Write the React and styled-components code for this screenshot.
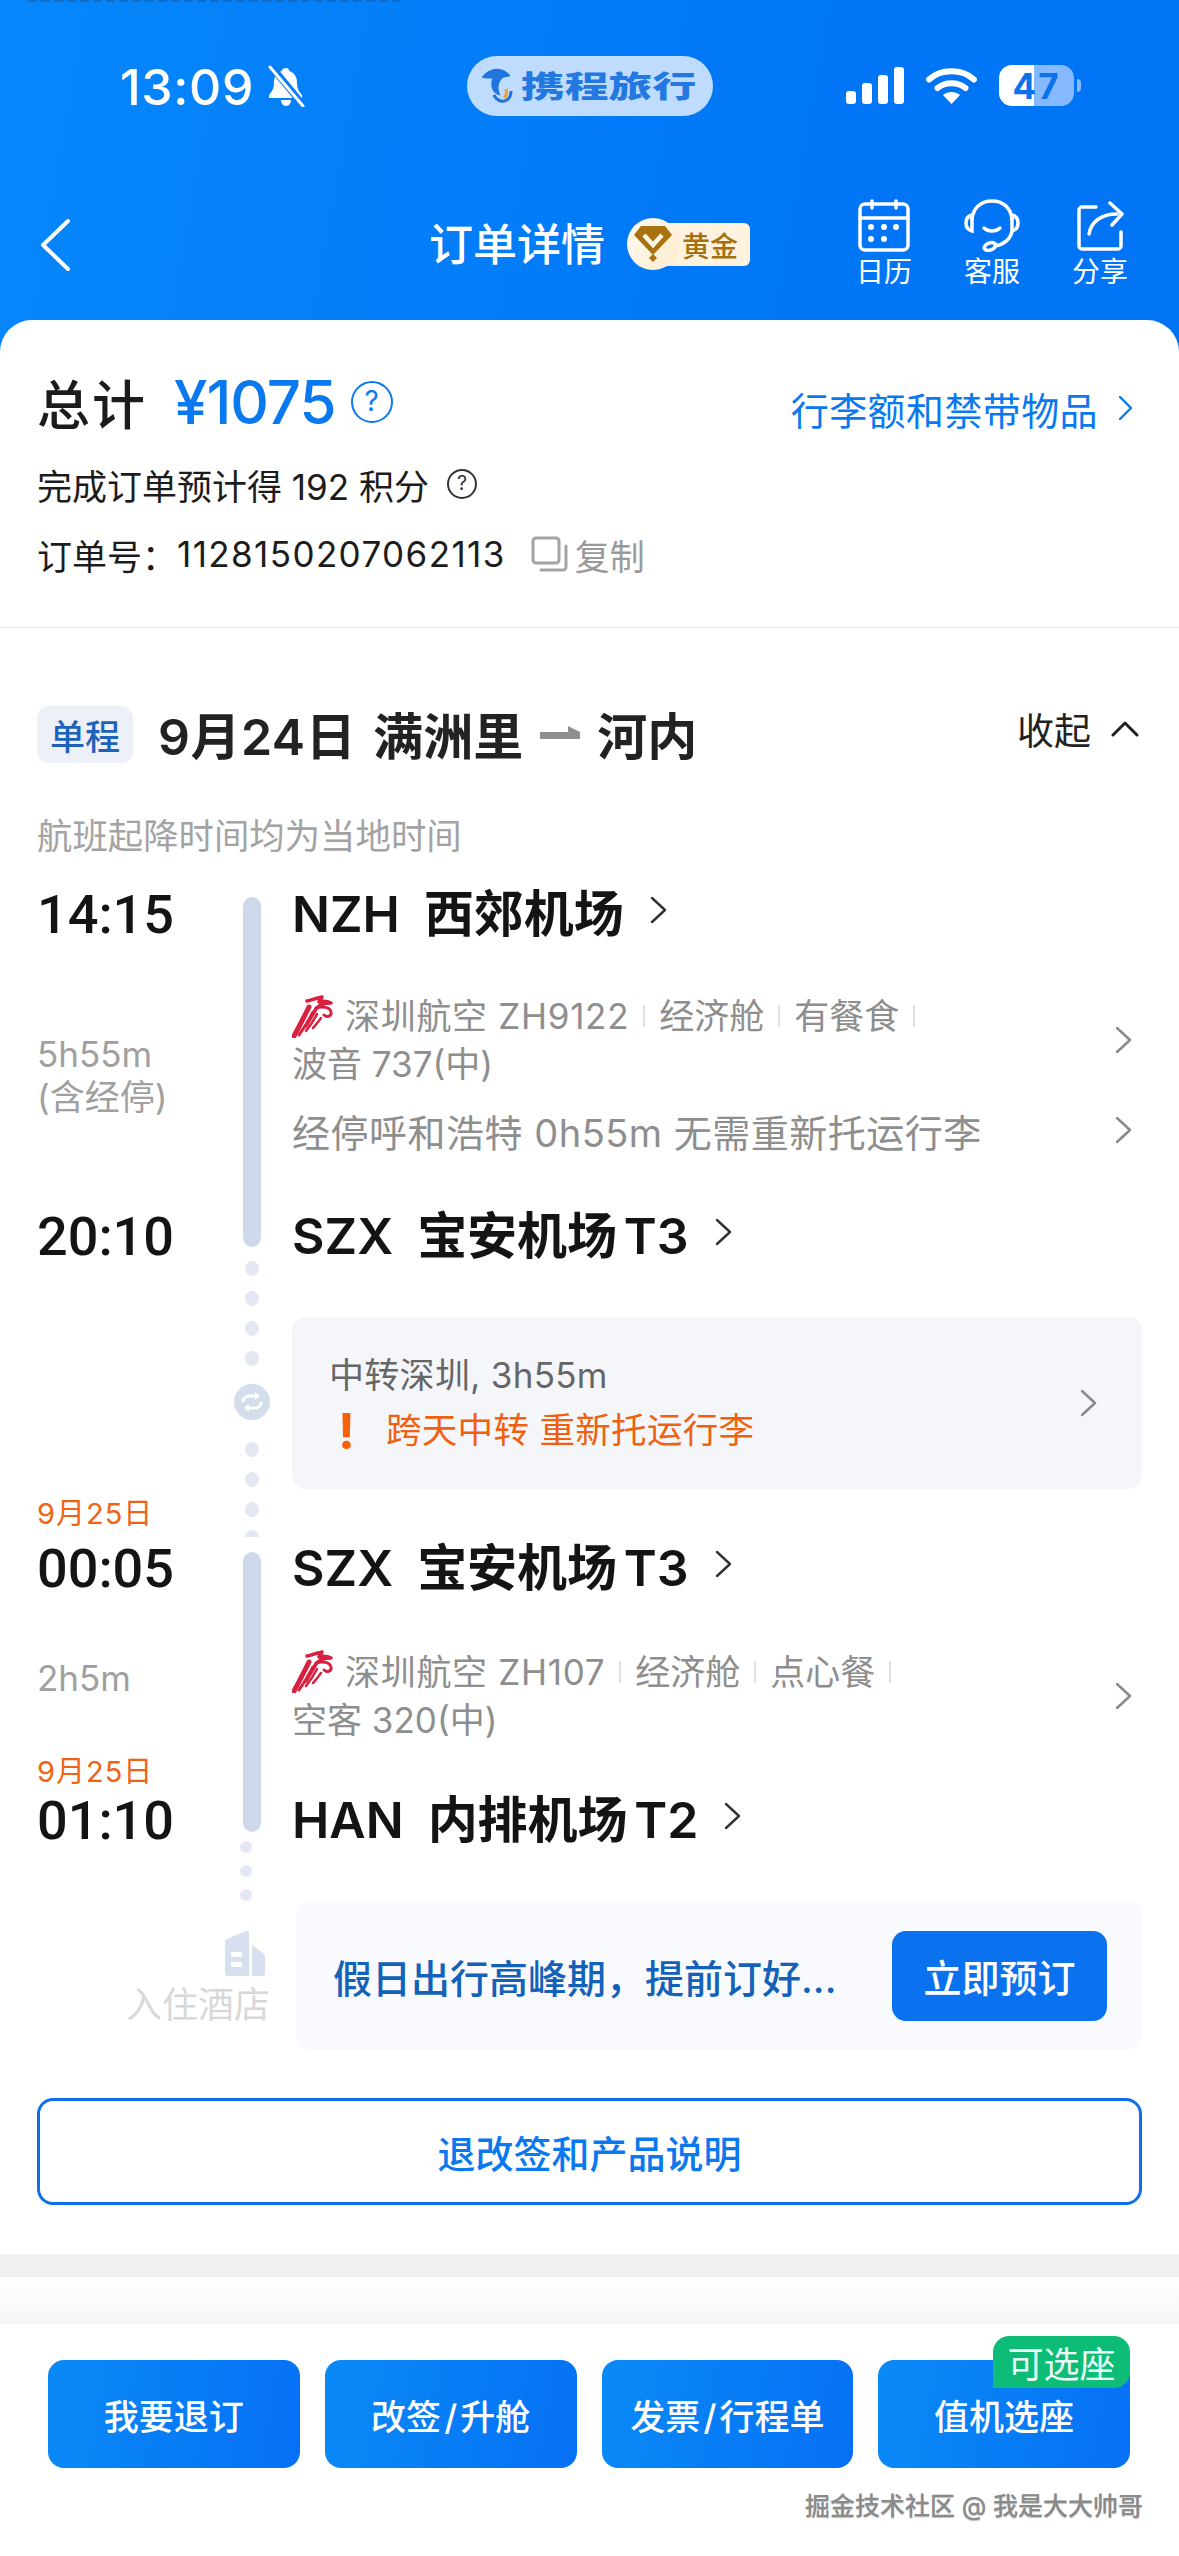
import React from 'react'
import styled, { createGlobalStyle } from 'styled-components'

const sans = `Inter, "Noto Sans CJK SC", sans-serif`
const blue = '#0a78ee'
const grey = '#8e8e8e'

const GlobalStyle = createGlobalStyle`
  html, body {
    margin: 0;
    padding: 0;
    background: #fff;
  }
  * { box-sizing: border-box; }
`

const Page = styled.div`
  width: 1179px;
  height: 2556px;
  overflow: hidden;
  display: flex;
  flex-direction: column;
  font-family: ${sans};
  color: #1a1a1a;
  background: linear-gradient(100deg, #0787fb 0%, #0076f6 70%, #0074f5 100%) top / 100% 380px no-repeat;
  position: relative;
`
// bottom edge of a notification sliding out at the very top of the capture
const TopLeak = styled.div`
  position: absolute;
  left: 28px;
  top: 0;
  width: 372px;
  height: 2px;
  background: repeating-linear-gradient(90deg, #1d5c9e 0, #1d5c9e 9px, transparent 9px, transparent 13px);
  opacity: 0.6;
`

const Header = styled.div`
  height: 320px;
  padding-top: 54px;
  flex-shrink: 0;
  color: #fff;
`
const StatusBar = styled.div`
  display: grid;
  grid-template-columns: 1fr auto 1fr;
  align-items: center;
  height: 60px;
`
const StatusLeft = styled.div`
  display: flex;
  align-items: center;
  gap: 12px;
  padding-left: 120px;
`
const Clock = styled.span`
  padding-top: 3px;
  font-size: 50px;
  font-weight: 500;
  letter-spacing: 0.6px;
`
const LogoPill = styled.div`
  display: flex;
  align-items: center;
  width: 246px;
  height: 60px;
  padding-left: 14px;
  border-radius: 30px;
  background: #bfdcfe;
`
const LogoText = styled.span`
  display: inline-block;
  margin-left: 8px;
  font-size: 30px;
  line-height: 1;
  font-weight: 900;
  color: #2478e2;
  white-space: nowrap;
  transform: scaleX(1.46);
  transform-origin: left center;
`
const StatusRight = styled.div`
  display: flex;
  align-items: center;
  justify-content: flex-end;
  gap: 22px;
  padding-right: 105px;
`
const Battery = styled.div`
  display: flex;
  align-items: center;
  justify-content: center;
  width: 75px;
  height: 41px;
  border-radius: 13px;
  background: linear-gradient(90deg, #fff 0, #fff 35px, #86b9fd 35px);
  color: #0a72ec;
  font-size: 35px;
  font-weight: 700;
  letter-spacing: 2px;
  position: relative;
  &::after {
    content: '';
    position: absolute;
    right: -7px;
    top: 14px;
    width: 4px;
    height: 13px;
    border-radius: 0 4px 4px 0;
    background: #86b9fd;
  }
`
const NavBar = styled.div`
  display: grid;
  grid-template-columns: 1fr auto 1fr;
  align-items: center;
  margin-top: 85px;
`
const BackLink = styled.div`
  display: flex;
  padding-left: 39px;
`
const TitleGroup = styled.div`
  display: flex;
  align-items: center;
  gap: 22px;
`
const NavTitle = styled.span`
  font-size: 44px;
  font-weight: 500;
  line-height: 60px;
`
const Tier = styled.div`
  display: flex;
  align-items: center;
  height: 43px;
  width: 110px;
  margin-left: 13px;
  padding-left: 42px;
  border-radius: 6px;
  background: #fff3df;
  color: #a5710f;
  font-size: 28px;
  font-weight: 500;
  position: relative;
`
const TierGem = styled.div`
  position: absolute;
  left: -13px;
  top: -5px;
  width: 52px;
  height: 52px;
  border-radius: 50%;
  background: linear-gradient(120deg, #fffaf0, #fdeccd);
  display: flex;
  align-items: center;
  justify-content: center;
`
const NavActions = styled.div`
  display: flex;
  justify-content: flex-end;
  padding-right: 25px;
`
const NavAction = styled.div`
  width: 108px;
  display: flex;
  flex-direction: column;
  align-items: center;
`
const NavIcon = styled.div`
  height: 53px;
  display: flex;
  align-items: center;
`
const NavLabel = styled.span`
  margin-top: 2px;
  font-size: 28px;
  line-height: 36px;
`

const Card = styled.div`
  flex: 1;
  border-radius: 32px 32px 0 0;
  background: #fff;
  display: flex;
  flex-direction: column;
  min-height: 0;
`
const Summary = styled.div`
  padding: 47px 37px 48px;
  border-bottom: 1px solid #e6e6e6;
`
const TotalRow = styled.div`
  display: flex;
  align-items: center;
  height: 70px;
`
const TotalLabel = styled.span`
  font-size: 53px;
  font-weight: 500;
  letter-spacing: 2px;
  color: #1c1c1c;
`
const TotalPrice = styled.span`
  margin-left: 27px;
  font-size: 60px;
  font-weight: 500;
  color: ${blue};
  letter-spacing: -1px;
`
const Help = styled.span`
  display: inline-flex;
  align-items: center;
  justify-content: center;
  width: ${p => p.$size}px;
  height: ${p => p.$size}px;
  margin-left: ${p => p.$gap}px;
  border: 2.5px solid ${p => p.$color};
  border-radius: 50%;
  color: ${p => p.$color};
  font-size: ${p => p.$size * 0.66}px;
  line-height: 1;
`
const BaggageLink = styled.div`
  margin-left: auto;
  margin-top: 12px;
  margin-right: 9px;
  display: flex;
  align-items: center;
  gap: 20px;
  font-size: 38px;
  letter-spacing: 0.4px;
  color: ${blue};
`
const SummaryLine = styled.div`
  display: flex;
  align-items: center;
  height: 50px;
  margin-top: ${p => p.$top}px;
  font-size: 35px;
  color: #1c1c1c;
  white-space: nowrap;
`
const OrderNumber = styled.span`
  letter-spacing: 1.4px;
`
const CopyAction = styled.span`
  display: flex;
  align-items: center;
  gap: 7px;
  margin-left: 25px;
  color: #9a9a9a;
`

const Itinerary = styled.div`
  padding: 78px 37px 0;
`
const TripHead = styled.div`
  display: flex;
  align-items: flex-start;
  height: 57px;
`
const TripTag = styled.span`
  display: flex;
  align-items: center;
  justify-content: center;
  width: 96px;
  height: 57px;
  border-radius: 12px;
  background: #edf1f7;
  color: #1d63b9;
  font-size: 35px;
  font-weight: 500;
`
const TripTitle = styled.div`
  display: flex;
  align-items: center;
  gap: 17px;
  height: 54px;
  margin-left: 25px;
  font-size: 50px;
  font-weight: 600;
  color: #222;
  white-space: nowrap;
`
const TripDate = styled.span`
  letter-spacing: 0.5px;
`
const Collapse = styled.div`
  margin-left: auto;
  margin-right: 3px;
  display: flex;
  align-items: center;
  gap: 20px;
  height: 46px;
  font-size: 37px;
  color: #222;
`
const Note = styled.div`
  margin-top: 49px;
  font-size: 35.4px;
  line-height: 50px;
  color: #a3a3a3;
`

const Timeline = styled.div`
  display: grid;
  grid-template-columns: 175px 40px 1fr;
  column-gap: 20px;
  margin-top: 19px;
`
const Rail = styled.div`
  grid-column: 2;
  grid-row: 1 / 10;
  display: flex;
  flex-direction: column;
  align-items: center;
  padding-top: 16px;
`
const RailBar = styled.div`
  flex-shrink: 0;
  width: 18px;
  height: ${p => p.$height}px;
  border-radius: 9px;
  background: #cfd9ec;
`
const RailDot = styled.div`
  flex-shrink: 0;
  width: 14px;
  height: 15px;
  margin-top: ${p => p.$top}px;
  border-radius: 50%;
  background: #e3e8f2;
`
const RailEnd = styled.div`
  flex-shrink: 0;
  width: 14px;
  height: 7px;
  margin-top: 13px;
  margin-bottom: 15px;
  border-radius: 7px 7px 0 0;
  background: #e3e8f2;
`
const TailDot = styled.div`
  flex-shrink: 0;
  width: 12px;
  height: 12px;
  margin-top: ${p => p.$top}px;
  margin-right: 12px;
  border-radius: 50%;
  background: #e3e8f2;
`
const TransferBadge = styled.div`
  flex-shrink: 0;
  width: 36px;
  height: 36px;
  margin: 18px 0 22px;
  border-radius: 50%;
  background: #d5dcec;
  display: flex;
  align-items: center;
  justify-content: center;
`
const TimeCell = styled.div`
  grid-column: 1;
  display: flex;
  flex-direction: column;
  justify-content: flex-end;
  padding-bottom: ${p => p.$bottom || 0}px;
`
const DateTag = styled.div`
  font-size: 29px;
  line-height: 36px;
  letter-spacing: 1px;
  margin-bottom: ${p => p.$gap || 0}px;
  color: #ef6414;
`
const Time = styled.div`
  font-family: Roboto, sans-serif;
  font-size: 54px;
  font-weight: 500;
  line-height: ${p => p.$line}px;
  color: #141414;
`
const Airport = styled.div`
  grid-column: 3;
  align-self: end;
  display: flex;
  align-items: center;
  gap: 26px;
  height: 68px;
  padding-bottom: 10px;
  font-size: 50px;
  font-weight: 600;
  word-spacing: -6px;
  color: #141414;
  white-space: nowrap;
`
const Code = styled.span`
  margin-right: 24px;
  font-weight: 600;
`
const DurationCell = styled.div`
  grid-column: 1;
  grid-row-end: span ${p => p.$span || 1};
  padding-top: ${p => p.$top}px;
  font-size: 35px;
  line-height: 43px;
  color: #a0a0a0;
`
const FlightCell = styled.div`
  grid-column: 3;
  display: flex;
  align-items: center;
  justify-content: space-between;
  height: ${p => p.$height}px;
  padding: ${p => p.$top}px 10px 0 0;
`
const FlightInfo = styled.div`
  font-size: 35px;
  line-height: 48px;
  color: ${grey};
`
const FlightLine = styled.div`
  display: flex;
  align-items: center;
  gap: 14px;
  white-space: nowrap;
`
const Carrier = styled.span`
  display: flex;
  align-items: center;
  gap: 11px;
  letter-spacing: 0.7px;
`
const Sep = styled.span`
  width: 2px;
  height: 22px;
  background: #e2e2e2;
`
const StopCell = styled.div`
  grid-column: 3;
  display: flex;
  align-items: center;
  justify-content: space-between;
  height: 48px;
  margin-bottom: 44px;
  padding: 0 10px 10px 0;
  font-size: 38px;
  letter-spacing: 0.5px;
  color: ${grey};
  white-space: nowrap;
`
const Transfer = styled.div`
  grid-column: 3;
  margin: 46px 0 7px;
  height: 172px;
  padding: 0 45px 0 37px;
  border-radius: 14px;
  background: #f5f6fa;
  display: flex;
  align-items: center;
  justify-content: space-between;
`
const TransferText = styled.div`
  font-size: 35px;
  line-height: 52px;
  letter-spacing: 0.3px;
  color: #666;
`
const Warning = styled.div`
  display: flex;
  align-items: center;
  margin-top: 4px;
  color: #f0600f;
  font-size: 35.5px;
`
const Bang = styled.span`
  width: 57px;
  padding-left: 9px;
  color: #f8600a;
  font-size: 50px;
  font-weight: 700;
  line-height: 52px;
`
const HotelCell = styled.div`
  grid-column: 1 / 3;
  grid-row: 9;
  display: flex;
  flex-direction: column;
  align-items: flex-end;
  padding: 76px 2px 0 0;
`
const HotelMark = styled.div`
  display: flex;
  margin-right: 4px;
`
const HotelLabel = styled.span`
  margin-top: 4px;
  font-size: 36px;
  line-height: 50px;
  color: #d8d8d8;
`
const Promo = styled.div`
  grid-column: 3;
  grid-row: 9;
  margin: 46px 0 0 5px;
  height: 149px;
  padding: 0 35px 0 36px;
  border-radius: 14px;
  background: #f8fafe;
  display: flex;
  align-items: center;
  justify-content: space-between;
`
const PromoText = styled.span`
  font-size: 39px;
  font-weight: 500;
  color: #1361b8;
  white-space: nowrap;
`
const PromoButton = styled.span`
  display: flex;
  align-items: center;
  justify-content: center;
  width: 215px;
  height: 90px;
  border-radius: 14px;
  background: #0a72ee;
  color: #fff;
  font-size: 38px;
  font-weight: 500;
`
const RulesButton = styled.div`
  display: flex;
  align-items: center;
  justify-content: center;
  height: 107px;
  margin-top: 48px;
  border: 3px solid #0f6fe8;
  border-radius: 16px;
  color: ${blue};
  font-size: 38px;
  font-weight: 500;
`
const Band = styled.div`
  margin-top: 49px;
  height: 23px;
  background: #eff0f2;
`
const FooterShade = styled.div`
  height: 47px;
  background: linear-gradient(180deg, #ffffff, #f5f5f6);
`
const Footer = styled.div`
  flex: 1;
  background: #fff;
  padding-top: 36px;
`
const ActionRow = styled.div`
  display: grid;
  grid-template-columns: repeat(4, 1fr);
  gap: 25px;
  padding: 0 49px 0 48px;
`
const ActionButton = styled.div`
  height: 108px;
  border-radius: 16px;
  background: linear-gradient(100deg, #0a8af6, #0670f5);
  color: #fff;
  font-size: 35px;
  font-weight: 500;
  display: flex;
  align-items: center;
  justify-content: center;
  position: relative;
`
const SeatBadge = styled.span`
  position: absolute;
  top: -24px;
  right: 0;
  width: 137px;
  height: 52px;
  border-radius: 16px 16px 16px 0;
  background: #0dbd77;
  color: #eafff5;
  font-size: 36px;
  font-weight: 400;
  display: flex;
  align-items: center;
  justify-content: center;
`
const Watermark = styled.div`
  margin-top: 20px;
  padding-right: 36px;
  text-align: right;
  font-size: 25px;
  font-weight: 500;
  line-height: 36px;
  color: #8a8a8a;
  text-shadow: 0 1px 1px rgba(0, 0, 0, 0.25);
`

function Chevron({ w = 17, h = 28, color = '#888', sw = 2.4 }) {
  return (
    <svg width={w} height={h} viewBox={`0 0 ${w} ${h}`} fill="none">
      <path d={`M2 2 L${w - 2} ${h / 2} L2 ${h - 2}`} stroke={color} strokeWidth={sw} strokeLinecap="round" strokeLinejoin="round" />
    </svg>
  )
}

function BellOff() {
  return (
    <svg width="40" height="42" viewBox="0 0 40 42">
      <path d="M20 3c2 0 3 1 3.300 3 5 1.500 7.700 6 7.700 11 0 6 1.500 9 5 13v3H3v-3c3.500-4 5-7 5-13 0-5 2.700-9.500 7.700-11C16 4 18 3 20 3z" fill="#fff" />
      <path d="M15 35h10c0 3-2 6-5 6s-5-3-5-6z" fill="#fff" />
      <path d="M5 1l32 39" stroke="#0a7cf6" strokeWidth="7" />
      <path d="M4 2l33 39" stroke="#fff" strokeWidth="3" strokeLinecap="round" />
    </svg>
  )
}

function Signal() {
  return (
    <svg width="58" height="37" viewBox="0 0 58 37" fill="#fff">
      <rect x="0" y="24" width="10" height="13" rx="3" />
      <rect x="16" y="16" width="10" height="21" rx="3" />
      <rect x="32" y="8" width="10" height="29" rx="3" />
      <rect x="48" y="0" width="10" height="37" rx="3" />
    </svg>
  )
}

function Wifi() {
  return (
    <svg width="51" height="37" viewBox="0 0 51 37" fill="none">
      <path d="M3 12.500C15 1.500 36 1.500 48 12.500" stroke="#fff" strokeWidth="6" strokeLinecap="round" />
      <path d="M11.500 21C19 14.500 32 14.500 39.500 21" stroke="#fff" strokeWidth="6" strokeLinecap="round" />
      <path d="M17 28c5-4 12-4 17 0l-8.500 9z" fill="#fff" />
    </svg>
  )
}

function Dolphin() {
  return (
    <svg width="32" height="36" viewBox="0 0 32 36">
      <path d="M1 9C5 4 11 0 18 1c4 .6 7 2 10 5 1 1 1.500 2 .5 2.500-2 .5-4 .5-6 1-3 2-5 6-5 10 0 3 1 6 2 8-5-1-8-4-9-9-.5-3 0-6 1-8-3 0-7 0-10-.5z" fill="#1f74de" />
      <path d="M13 27c2 5 8 8 13 5 3-2 4-5 4-9" fill="none" stroke="#1f74de" strokeWidth="3" />
      <path d="M25 21c1 3 .5 7-2 9" fill="none" stroke="#eda53a" strokeWidth="3.500" />
    </svg>
  )
}

function Gem() {
  return (
    <svg width="40" height="38" viewBox="0 0 40 38">
      <path d="M8 1h24l7 9-19 20L1 10z" fill="#a8720f" />
      <path d="M11 10l9 10 9-10" fill="none" stroke="#fff6e6" strokeWidth="4.500" />
      <path d="M20 29l4 4-4 4-4-4z" fill="#a8720f" />
    </svg>
  )
}

function CalendarIcon() {
  return (
    <svg width="52" height="53" viewBox="0 0 52 53" fill="none" stroke="#fff" strokeWidth="3.500" strokeLinecap="round">
      <rect x="2" y="5" width="48" height="46" rx="5" />
      <path d="M2 19h48M14 2v7M38 2v7" />
      <g fill="#fff" stroke="none">
        <circle cx="13" cy="28" r="3" /><circle cx="26" cy="28" r="3" /><circle cx="38" cy="28" r="3" />
        <circle cx="13" cy="40" r="3" /><circle cx="26" cy="40" r="3" />
      </g>
    </svg>
  )
}

function HeadsetIcon() {
  return (
    <svg width="56" height="53" viewBox="0 0 56 53" fill="none" stroke="#fff" strokeWidth="3.500" strokeLinecap="round">
      <path d="M8 20C9 9 17 2 28 2s19 7 20 18" />
      <path d="M8 16c-4 1-6 4-6 8s2 7 6 8zM48 16c4 1 6 4 6 8s-2 7-6 8z" />
      <path d="M20 29c4 4 12 4 16 0" />
      <path d="M48 32c-1 8-9 14-17 15" />
      <ellipse cx="26" cy="47.500" rx="6" ry="3.500" transform="rotate(-20 26 47.500)" />
    </svg>
  )
}

function ShareIcon() {
  return (
    <svg width="50" height="50" viewBox="0 0 50 50" fill="none" stroke="#fff" strokeWidth="3.500" strokeLinecap="round" strokeLinejoin="round">
      <path d="M21 6H7a3 3 0 0 0-3 3v36a3 3 0 0 0 3 3h36a3 3 0 0 0 3-3V31" />
      <path d="M14 33c2-12 12-20 28-20" />
      <path d="M35 2l12 11-10 11" />
    </svg>
  )
}

function BackIcon() {
  return (
    <svg width="32" height="54" viewBox="0 0 32 54" fill="none">
      <path d="M29 3L4 27l25 24" stroke="#fff" strokeWidth="4" strokeLinecap="round" strokeLinejoin="round" />
    </svg>
  )
}

function CopyIcon() {
  return (
    <svg width="37" height="36" viewBox="0 0 37 36" fill="none" stroke="#a4a4a4" strokeWidth="3">
      <rect x="2" y="2" width="26" height="25" rx="3" />
      <path d="M35 10v21a3 3 0 0 1-3 3H10" strokeLinecap="round" />
    </svg>
  )
}

function RouteArrow() {
  return (
    <svg width="40" height="14" viewBox="0 0 40 14" fill="#8f8f8f">
      <path d="M0 6h28V0l12 6v7H0z" />
    </svg>
  )
}

function AirlineLogo() {
  return (
    <svg width="42" height="43" viewBox="0 0 42 43" fill="none" stroke="#d8203f" strokeLinecap="round" strokeLinejoin="round">
      <path d="M15 6c4-1 10-3 15-4l-3 5c4-1 8-1 12 1-7 0-12 2-15 6-3 5-6 10-10 17" strokeWidth="3.500" />
      <path d="M17 12C12 22 7 32 2 41" strokeWidth="5" />
      <path d="M21 17C17 25 12 33 7 40" strokeWidth="3" />
      <path d="M25 19c-3 6-7 12-11 17" strokeWidth="2.500" />
      <path d="M24 13c6-2 14-1 15 4 1 4-4 6-7 3" strokeWidth="3" />
      <path d="M29 23c-3 4-5 7-8 10" strokeWidth="2.500" />
    </svg>
  )
}

function TransferIcon() {
  return (
    <svg width="24" height="24" viewBox="0 0 24 24" fill="none" stroke="#fff" strokeWidth="3">
      <path d="M3 12c0-4 3-6 6-6h9" />
      <path d="M21 12c0 4-3 6-6 6H6" />
      <path d="M15 2l5 4-5 4zM9 14l-5 4 5 4z" fill="#fff" stroke="none" />
    </svg>
  )
}

function HotelIcon() {
  return (
    <svg width="44" height="45" viewBox="0 0 44 45">
      <path d="M3 9L24 0c2-.5 3 .5 3 2v43H6c-2 0-3-1-3-3z" fill="#d8e0ef" />
      <path d="M30 14l11 8c1 1 2 2 2 3v17c0 2-1 3-3 3H30z" fill="#d8e0ef" />
      <rect x="9" y="21" width="11" height="5" rx="1.500" fill="#fff" />
      <rect x="9" y="31" width="11" height="5" rx="1.500" fill="#fff" />
    </svg>
  )
}

function Flight({ name, tags, plane }) {
  return (
    <FlightInfo>
      <FlightLine>
        <Carrier><AirlineLogo />{name}</Carrier>
        {tags.map(t => (
          <React.Fragment key={t}>
            <Sep />
            <span>{t}</span>
          </React.Fragment>
        ))}
        <Sep />
      </FlightLine>
      <div>{plane}</div>
    </FlightInfo>
  )
}

function AirportName({ code, name }) {
  return (
    <Airport>
      <span><Code>{code}</Code>{name}</span>
      <Chevron color="#333" h={28} />
    </Airport>
  )
}

export default function App() {
  return (
    <Page>
      <GlobalStyle />
      <TopLeak />
      <Header>
        <StatusBar>
          <StatusLeft>
            <Clock>13:09</Clock>
            <BellOff />
          </StatusLeft>
          <LogoPill>
            <Dolphin />
            <LogoText>携程旅行</LogoText>
          </LogoPill>
          <StatusRight>
            <Signal />
            <Wifi />
            <Battery>47</Battery>
          </StatusRight>
        </StatusBar>
        <NavBar>
          <BackLink><BackIcon /></BackLink>
          <TitleGroup>
            <NavTitle>订单详情</NavTitle>
            <Tier>
              <TierGem><Gem /></TierGem>
              黄金
            </Tier>
          </TitleGroup>
          <NavActions>
            <NavAction><NavIcon><CalendarIcon /></NavIcon><NavLabel>日历</NavLabel></NavAction>
            <NavAction><NavIcon><HeadsetIcon /></NavIcon><NavLabel>客服</NavLabel></NavAction>
            <NavAction><NavIcon><ShareIcon /></NavIcon><NavLabel>分享</NavLabel></NavAction>
          </NavActions>
        </NavBar>
      </Header>

      <Card>
        <Summary>
          <TotalRow>
            <TotalLabel>总计</TotalLabel>
            <TotalPrice>¥1075</TotalPrice>
            <Help $size={42} $gap={15} $color={blue}>?</Help>
            <BaggageLink>
              行李额和禁带物品
              <Chevron w={15} h={26} color={blue} />
            </BaggageLink>
          </TotalRow>
          <SummaryLine $top={22}>
            完成订单预计得 192 积分
            <Help $size={30} $gap={18} $color="#333">?</Help>
          </SummaryLine>
          <SummaryLine $top={20}>
            订单号：<OrderNumber>1128150207062113</OrderNumber>
            <CopyAction><CopyIcon />复制</CopyAction>
          </SummaryLine>
        </Summary>

        <Itinerary>
          <TripHead>
            <TripTag>单程</TripTag>
            <TripTitle>
              <TripDate>9月24日</TripDate>
              <span>满洲里</span>
              <RouteArrow />
              <span>河内</span>
            </TripTitle>
            <Collapse>
              收起
              <svg width="28" height="16" viewBox="0 0 28 16" fill="none">
                <path d="M2 14L14 2l12 12" stroke="#222" strokeWidth="3" strokeLinecap="round" strokeLinejoin="round" />
              </svg>
            </Collapse>
          </TripHead>
          <Note>航班起降时间均为当地时间</Note>

          <Timeline>
            <Rail>
              <RailBar $height={350} />
              <RailDot $top={14} />
              <RailDot $top={15} />
              <RailDot $top={15} />
              <RailDot $top={15} />
              <TransferBadge><TransferIcon /></TransferBadge>
              <RailDot $top={0} />
              <RailDot $top={15} />
              <RailDot $top={15} />
              <RailEnd />
              <RailBar $height={280} />
              <TailDot $top={9} />
              <TailDot $top={12} />
              <TailDot $top={12} />
            </Rail>

            <TimeCell><Time $line={68}>14:15</Time></TimeCell>
            <AirportName code="NZH" name="西郊机场" />

            <DurationCell $top={84} $span={2}>5h55m<br />(含经停)</DurationCell>
            <FlightCell $height={162} $top={20}>
              <Flight name="深圳航空 ZH9122" tags={['经济舱', '有餐食']} plane="波音 737(中)" />
              <Chevron />
            </FlightCell>

            <StopCell>
              经停呼和浩特 0h55m 无需重新托运行李
              <Chevron />
            </StopCell>

            <TimeCell><Time $line={68}>20:10</Time></TimeCell>
            <AirportName code="SZX" name="宝安机场 T3" />

            <Transfer>
              <TransferText>
                中转深圳, 3h55m
                <Warning><Bang>!</Bang>跨天中转 重新托运行李</Warning>
              </TransferText>
              <Chevron />
            </Transfer>

            <TimeCell $bottom={3}>
              <DateTag $gap={6}>9月25日</DateTag>
              <Time $line={62}>00:05</Time>
            </TimeCell>
            <AirportName code="SZX" name="宝安机场 T3" />

            <DurationCell $top={54}>2h5m</DurationCell>
            <FlightCell $height={151} $top={34}>
              <Flight name="深圳航空 ZH107" tags={['经济舱', '点心餐']} plane="空客 320(中)" />
              <Chevron />
            </FlightCell>

            <TimeCell $bottom={3}>
              <DateTag>9月25日</DateTag>
              <Time $line={62}>01:10</Time>
            </TimeCell>
            <AirportName code="HAN" name="内排机场 T2" />

            <HotelCell>
              <HotelMark><HotelIcon /></HotelMark>
              <HotelLabel>入住酒店</HotelLabel>
            </HotelCell>
            <Promo>
              <PromoText>假日出行高峰期，提前订好...</PromoText>
              <PromoButton>立即预订</PromoButton>
            </Promo>
          </Timeline>

          <RulesButton>退改签和产品说明</RulesButton>
        </Itinerary>

        <Band />
        <FooterShade />
        <Footer>
          <ActionRow>
            <ActionButton>我要退订</ActionButton>
            <ActionButton>改签{'\u200a'}/{'\u200a'}升舱</ActionButton>
            <ActionButton>发票{'\u200a'}/{'\u200a'}行程单</ActionButton>
            <ActionButton>
              值机选座
              <SeatBadge>可选座</SeatBadge>
            </ActionButton>
          </ActionRow>
          <Watermark>掘金技术社区 @ 我是大大帅哥</Watermark>
        </Footer>
      </Card>
    </Page>
  )
}
